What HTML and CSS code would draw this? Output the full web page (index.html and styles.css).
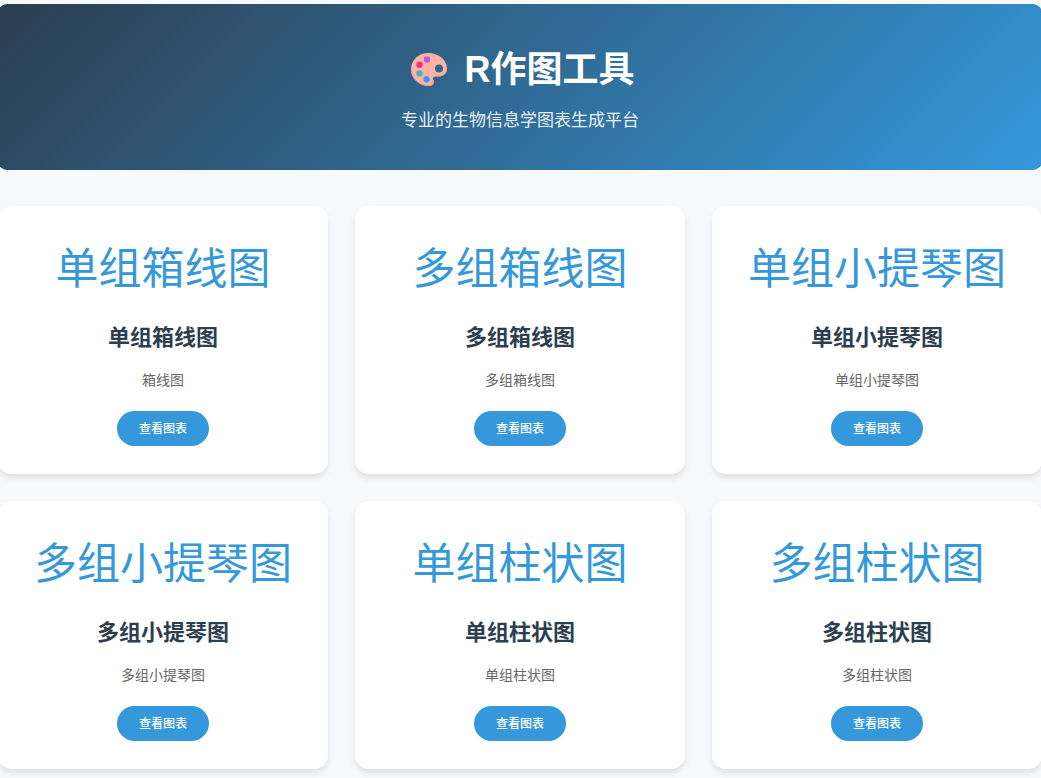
FILE: index.html
```html
<!DOCTYPE html>
<html lang="zh-CN">
<head>
<meta charset="utf-8">
<meta name="viewport" content="width=device-width, initial-scale=1">
<title>R作图工具</title>
<link rel="stylesheet" href="styles.css">
</head>
<body>
<div class="container">
  <header class="header">
    <h1 class="title">
      <svg class="palette" viewBox="0 0 38 36" aria-hidden="true">
        <path fill="#ffb3a3" d="M17 1C27 .5 37 7 37 16.500C37 22.500 32 25 27 24.500C23.500 24.200 22 25.500 23.200 28C24.600 31 23.500 34 19 34C9.500 34 1 27 1 17.500C1 8.500 8 1.500 17 1ZM29 12.500A4 4 0 1 0 29 20.500A4 4 0 1 0 29 12.500Z"/>
        <path fill="none" stroke="#eb9692" stroke-width="1" d="M1.500 19C2.500 27.500 10 33.500 18.500 33.500C23.500 33.500 24 30.500 22.800 28M36.500 18C36 22.500 31.500 24.500 27 24"/>
        <circle cx="17" cy="7.500" r="3.200" fill="#b65be0"/>
        <circle cx="9.500" cy="12.700" r="3.200" fill="#f5318c"/>
        <circle cx="9.500" cy="21.500" r="3.200" fill="#45b5b5"/>
        <circle cx="16.500" cy="27.200" r="3.200" fill="#3f93f7"/>
      </svg>
      <span>R作图工具</span>
    </h1>
    <p class="subtitle">专业的生物信息学图表生成平台</p>
  </header>
  <main class="grid">
    <article class="card">
      <div class="card-icon">单组箱线图</div>
      <h3 class="card-title">单组箱线图</h3>
      <p class="card-text">箱线图</p>
      <a class="button" href="#">查看图表</a>
    </article>
    <article class="card">
      <div class="card-icon">多组箱线图</div>
      <h3 class="card-title">多组箱线图</h3>
      <p class="card-text">多组箱线图</p>
      <a class="button" href="#">查看图表</a>
    </article>
    <article class="card">
      <div class="card-icon">单组小提琴图</div>
      <h3 class="card-title">单组小提琴图</h3>
      <p class="card-text">单组小提琴图</p>
      <a class="button" href="#">查看图表</a>
    </article>
    <article class="card">
      <div class="card-icon">多组小提琴图</div>
      <h3 class="card-title">多组小提琴图</h3>
      <p class="card-text">多组小提琴图</p>
      <a class="button" href="#">查看图表</a>
    </article>
    <article class="card">
      <div class="card-icon">单组柱状图</div>
      <h3 class="card-title">单组柱状图</h3>
      <p class="card-text">单组柱状图</p>
      <a class="button" href="#">查看图表</a>
    </article>
    <article class="card">
      <div class="card-icon">多组柱状图</div>
      <h3 class="card-title">多组柱状图</h3>
      <p class="card-text">多组柱状图</p>
      <a class="button" href="#">查看图表</a>
    </article>
  </main>
</div>
</body>
</html>
```
FILE: styles.css
```css
* {
  box-sizing: border-box;
  margin: 0;
  padding: 0;
}

body {
  background: #f8f9fb;
  color: #2c3e50;
  font-family: "Liberation Sans", "Noto Sans CJK SC", sans-serif;
  overflow-x: hidden;
}

.container {
  margin: 0 -1px 0 -2px;
  padding: 4px 0 10px;
}

.header {
  margin-bottom: 36px;
  padding: 37px 18px 35px;
  border-radius: 9px;
  background: linear-gradient(135deg, #2c3e50, #3498db);
  color: #fff;
  text-align: center;
}

.title {
  display: flex;
  justify-content: center;
  align-items: center;
  gap: 17px;
  margin-bottom: 8px;
  padding-left: 4px;
  font-size: 36px;
  line-height: 58px;
}

.palette {
  width: 38px;
  height: 36px;
}

.subtitle {
  font-size: 17px;
  line-height: 28px;
  opacity: 0.9;
}

.grid {
  display: grid;
  grid-template-columns: repeat(3, 1fr);
  gap: 27px;
}

.card {
  display: flex;
  flex-direction: column;
  align-items: center;
  padding: 29px 27px 28px;
  border-radius: 14px;
  background: #fff;
  box-shadow: 0 4px 6px rgba(0, 0, 0, 0.1);
  text-align: center;
}

.card-icon {
  margin-bottom: 16px;
  color: #3498db;
  font-size: 43px;
  font-weight: 400;
  line-height: 69px;
  white-space: nowrap;
}

.card-title {
  margin-bottom: 13px;
  font-size: 22px;
  line-height: 35px;
}

.card-text {
  margin-bottom: 19px;
  color: #666;
  font-size: 14px;
  line-height: 24px;
}

.button {
  padding: 9px 22px 7px;
  border-radius: 23px;
  background: #3498db;
  color: #fff;
  font-size: 12px;
  font-weight: 500;
  line-height: 19px;
  text-decoration: none;
}
```
